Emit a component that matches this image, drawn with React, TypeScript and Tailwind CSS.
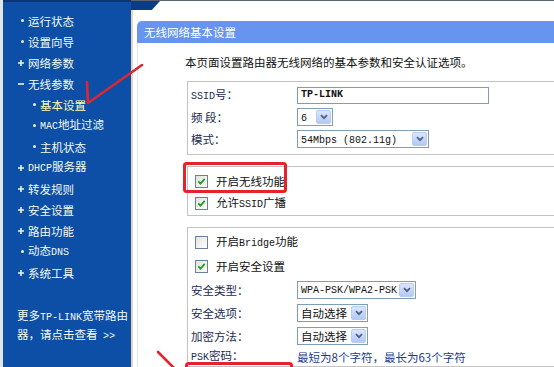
import React from "react";

// Latin text in the router page is a narrow monospace face
const M = ({ children, className = "" }: { children: React.ReactNode; className?: string }) => (
  <span className={`font-['Liberation_Mono',monospace] text-[10px] ${className}`}>{children}</span>
);

type Mark = "dot" | "plus" | "minus";

const menu: Array<{ mark: Mark; label: React.ReactNode; sub?: boolean; active?: boolean }> = [
  { mark: "dot", label: "运行状态" },
  { mark: "dot", label: "设置向导" },
  { mark: "plus", label: "网络参数" },
  { mark: "minus", label: "无线参数" },
  { mark: "dot", label: "基本设置", sub: true, active: true },
  { mark: "dot", label: <><M>MAC</M>地址过滤</>, sub: true },
  { mark: "dot", label: "主机状态", sub: true },
  { mark: "plus", label: <><M>DHCP</M>服务器</> },
  { mark: "plus", label: "转发规则" },
  { mark: "plus", label: "安全设置" },
  { mark: "plus", label: "路由功能" },
  { mark: "dot", label: <>动态<M>DNS</M></> },
  { mark: "plus", label: "系统工具" },
];

const MenuMark = ({ mark }: { mark: Mark }) => (
  <span className="w-[10px] flex items-center">
    {mark === "dot" && <span className="ml-[3px] w-[3px] h-[3px] rounded-full bg-[#e6f6dc]" />}
    {mark === "plus" && (
      <svg width="6" height="6" viewBox="0 0 6 6">
        <path d="M3 0v6M0 3h6" stroke="#e6f6dc" strokeWidth="1.6" />
      </svg>
    )}
    {mark === "minus" && (
      <svg width="6" height="6" viewBox="0 0 6 6">
        <path d="M0 3h6" stroke="#e6f6dc" strokeWidth="1.6" />
      </svg>
    )}
  </span>
);

const Select = ({ w, children }: { w: string; children: React.ReactNode }) => (
  <div className={`h-[18px] border border-[#7f9db9] bg-white flex items-center ${w}`}>
    <span className="flex-1 pl-[3px] text-[#111] whitespace-nowrap overflow-hidden">{children}</span>
    <span className="w-[15px] h-[14px] mr-[1px] rounded-[2px] border border-[#b7cbf5] bg-linear-to-b from-[#dbe6fe] to-[#b3c8f5] flex items-center justify-center">
      <svg width="8" height="6" viewBox="0 0 8 6">
        <path d="M1 1.2l3 3 3-3" stroke="#4d6185" strokeWidth="1.8" fill="none" />
      </svg>
    </span>
  </div>
);

const Check = ({ on }: { on?: boolean }) => (
  <span className="w-[13px] h-[13px] border border-[#6a819e] bg-linear-to-br from-[#e2e2dc] to-white flex items-center justify-center">
    {on && (
      <svg width="9" height="9" viewBox="0 0 9 9">
        <path d="M1.3 4.3l2.2 2.3 4.2-4.8" stroke="#21a121" strokeWidth="1.8" fill="none" />
      </svg>
    )}
  </span>
);

const Row = ({ label, h = "h-[22px]", children }: { label: React.ReactNode; h?: string; children: React.ReactNode }) => (
  <div className={`flex items-center ${h}`}>
    <span className="w-[106px] text-[#1d2b4f]">{label}</span>
    {children}
  </div>
);

const CheckRow = ({ on, h = "h-[22px]", children }: { on?: boolean; h?: string; children: React.ReactNode }) => (
  <div className={`flex items-center ${h} pl-[4px]`}>
    <Check on={on} />
    <span className="ml-[8px] text-[#111]">{children}</span>
  </div>
);

export default function App() {
  return (
    <div className="relative w-[554px] h-[367px] overflow-hidden flex bg-white text-[11.5px] leading-[16px] font-['Noto_Sans_CJK_SC',sans-serif]">
      <div className="w-[3px] bg-[#dfe5ec]" />

      {/* left menu */}
      <aside className="w-[128px] bg-[#0d4ea6] border-t-2 border-[#0a3676] flex flex-col pt-[8px] text-[#f3fbee]">
        {menu.map((item, i) => (
          <div
            key={i}
            className={`h-[21px] flex items-center ${item.sub ? "pl-[27px]" : "pl-[15px]"}`}
          >
            <MenuMark mark={item.mark} />
            <span className={item.active ? "text-[#fbfbb4]" : ""}>{item.label}</span>
          </div>
        ))}
        <div className="mt-[24px] pl-[14px] leading-[17px]">
          <div>
            更多<M>TP-LINK</M>宽带路由
          </div>
          <div>
            器，请点击查看 <M className="ml-[3px]">&gt;&gt;</M>
          </div>
        </div>
      </aside>

      {/* main frame */}
      <main className="relative flex-1 flex border-t border-[#5b6473]">
        <div className="absolute left-0 top-0 h-[9px] w-[29px] bg-[#0b3d87] [clip-path:polygon(0_0,100%_0,72%_100%,0_100%)]" />
        <div className="w-[2px] mt-[8px] bg-[#e6d5bc]" />
        <div className="flex-1 pl-[4px] pt-[20px] flex flex-col">
          <div className="h-[22px] rounded-tl-[5px] bg-[#6694ee] text-white pl-[7px] flex items-center">
            无线网络基本设置
          </div>
          <div className="flex-1 border-l border-[#e3e8ef] pl-[47px] pt-[11px]">
            <p className="text-[#111] mb-[11px] whitespace-nowrap">
              本页面设置路由器无线网络的基本参数和安全认证选项。
            </p>

            <div className="ml-[2px] -mr-[8px] border border-[#c3c3c3] pt-[2px] pb-[4px] pl-[3px]">
              <Row label={<><M>SSID</M>号：</>}>
                <div className="w-[192px] h-[17px] border border-[#7f9db9] bg-white pl-[3px] flex items-center">
                  <M className="text-[#111] font-bold">TP-LINK</M>
                </div>
              </Row>
              <Row label="频 段：">
                <Select w="w-[36px]">
                  <M>6</M>
                </Select>
              </Row>
              <Row label="模式：">
                <Select w="w-[132px]">
                  <M>54Mbps (802.11g)</M>
                </Select>
              </Row>
            </div>

            <div className="ml-[2px] -mr-[8px] mt-[11px] border border-[#c3c3c3] pt-[3px] pb-[1px] pl-[3px]">
              <CheckRow on>开启无线功能</CheckRow>
              <CheckRow on>
                允许<M>SSID</M>广播
              </CheckRow>
            </div>

            <div className="ml-[2px] -mr-[8px] mt-[11px] border border-[#c3c3c3] pt-[3px] pl-[3px]">
              <CheckRow h="h-[23px]">
                开启<M>Bridge</M>功能
              </CheckRow>
              <CheckRow on h="h-[24px]">
                开启安全设置
              </CheckRow>
              <Row label="安全类型：" h="h-[23px]">
                <Select w="w-[119px]">
                  <M>WPA-PSK/WPA2-PSK</M>
                </Select>
              </Row>
              <Row label="安全选项：" h="h-[23px]">
                <Select w="w-[71px]">自动选择</Select>
              </Row>
              <Row label="加密方法：" h="h-[23px]">
                <Select w="w-[71px]">自动选择</Select>
              </Row>
              <Row label={<><M>PSK</M>密码：</>} h="h-[19px]">
                <span className="text-[#1c3d8f] whitespace-nowrap">最短为8个字符，最长为63个字符</span>
              </Row>
            </div>
          </div>
        </div>
      </main>

      {/* red annotations drawn over the page */}
      <svg className="absolute inset-0 pointer-events-none" width="554" height="367" viewBox="0 0 554 367">
        <g stroke="#dc2632" strokeWidth="2.6" fill="none" strokeLinecap="round">
          <path d="M142 65L88 103M87 82L88 103" />
          <path d="M158 352L180 374" />
        </g>
        <g stroke="#e8222c" strokeWidth="3" fill="none">
          <rect x="184.5" y="163.5" width="101" height="28" rx="2" />
          <rect x="186.5" y="363.5" width="105" height="20" rx="2" />
        </g>
      </svg>
    </div>
  );
}
